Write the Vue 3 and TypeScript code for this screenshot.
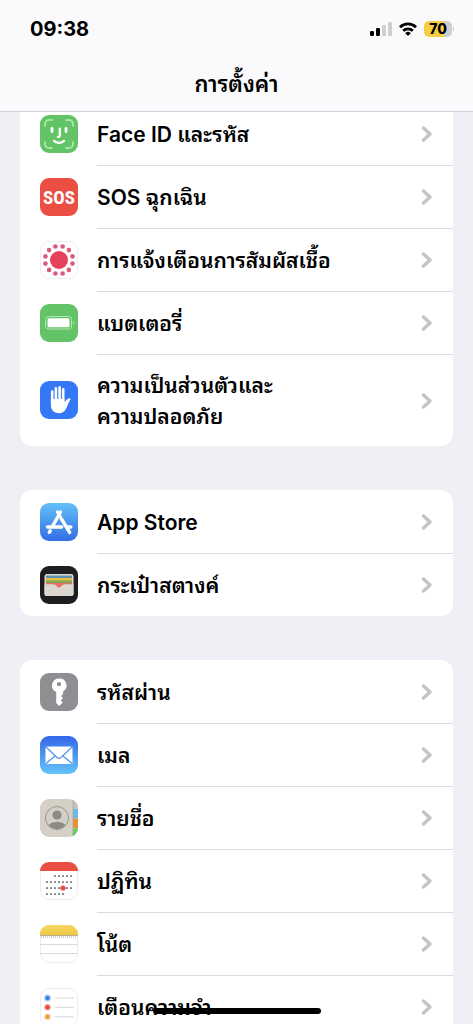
<script setup lang="ts">
type IconName =
  | 'face' | 'sos' | 'exposure' | 'battery' | 'hand' | 'store' | 'wallet'
  | 'key' | 'mail' | 'contacts' | 'calendar' | 'notes' | 'reminders'

interface Item {
  icon: IconName
  label: string
  tall?: boolean
}

const groups: Item[][] = [
  [
    { icon: 'face', label: 'Face ID และรหัส' },
    { icon: 'sos', label: 'SOS ฉุกเฉิน' },
    { icon: 'exposure', label: 'การแจ้งเตือนการสัมผัสเชื้อ' },
    { icon: 'battery', label: 'แบตเตอรี่' },
    { icon: 'hand', label: 'ความเป็นส่วนตัวและ\nความปลอดภัย', tall: true },
  ],
  [
    { icon: 'store', label: 'App Store' },
    { icon: 'wallet', label: 'กระเป๋าสตางค์' },
  ],
  [
    { icon: 'key', label: 'รหัสผ่าน' },
    { icon: 'mail', label: 'เมล' },
    { icon: 'contacts', label: 'รายชื่อ' },
    { icon: 'calendar', label: 'ปฏิทิน' },
    { icon: 'notes', label: 'โน้ต' },
    { icon: 'reminders', label: 'เตือนความจำ' },
  ],
]

const petals = Array.from({ length: 12 }, (_, i) => {
  const a = ((i + 0.5) / 12) * Math.PI * 2
  return { x: 19 + Math.sin(a) * 14, y: 19 - Math.cos(a) * 14 }
})

const days: { x: number; y: number }[] = []
const weeks = [
  [2, 6],
  [0, 6],
  [0, 6],
  [0, 4],
]
weeks.forEach(([from, to], row) => {
  for (let c = from; c <= to; c++) days.push({ x: 7 + c * 4, y: 14 + row * 6 })
})
</script>

<template>
  <div class="screen">
    <header class="top">
      <div class="status">
        <time class="clock">09:38</time>
        <div class="indicators">
          <svg width="22" height="14" viewBox="0 0 22 14" aria-hidden="true">
            <rect x="0" y="9" width="4" height="5" rx="1.2" />
            <rect x="6" y="6" width="4" height="8" rx="1.2" />
            <rect x="12" y="3" width="4" height="11" rx="1.2" fill="#cfcfd2" />
            <rect x="18" y="0" width="4" height="14" rx="1.2" fill="#cfcfd2" />
          </svg>
          <svg width="18" height="14" viewBox="0 0 18 14" aria-hidden="true">
            <g fill="none" stroke="#000" stroke-width="2.8">
              <path d="M1 5.2a11.4 11.4 0 0 1 16 0" />
              <path d="M4.2 8.8a6.9 6.9 0 0 1 9.6 0" />
            </g>
            <path d="M9 14 6.2 11.2a4 4 0 0 1 5.6 0Z" />
          </svg>
          <div class="battery">
            <div class="charge"><span class="level">70</span></div>
            <div class="nub"></div>
          </div>
        </div>
      </div>
      <h1 class="title">การตั้งค่า</h1>
    </header>

    <main class="list">
      <nav v-for="(group, g) in groups" :key="g" class="card">
        <a
          v-for="item in group"
          :key="item.icon"
          href="#"
          class="row"
          :class="{ tall: item.tall }"
        >
          <svg class="icon" viewBox="0 0 38 38" aria-hidden="true">
            <template v-if="item.icon === 'face'">
              <rect width="38" height="38" rx="9" fill="#62c466" />
              <g fill="none" stroke-linecap="round">
                <path d="M5 11V9a4 4 0 0 1 4-4h3M26 5h3a4 4 0 0 1 4 4v2M33 27v2a4 4 0 0 1-4 4h-3M12 33H9a4 4 0 0 1-4-4v-2" stroke="#a9e5a6" stroke-width="1.9" />
                <path d="M12 13.5v3M26 13.5v3" stroke="#fff" stroke-width="2.8" />
                <path d="M19.8 13.5v7q0 1.4-1.9 1.4M14 26q5 3.6 10 0" stroke="#fff" stroke-width="2.2" />
              </g>
            </template>

            <template v-else-if="item.icon === 'sos'">
              <rect width="38" height="38" rx="9" fill="#eb4e42" />
              <text x="19" y="26" text-anchor="middle" class="sos">SOS</text>
            </template>

            <template v-else-if="item.icon === 'exposure'">
              <rect x=".5" y=".5" width="37" height="37" rx="8.5" fill="#fff" stroke="#ededef" />
              <circle cx="19" cy="19" r="9" fill="#e8415a" />
              <circle v-for="(p, i) in petals" :key="i" :cx="p.x" :cy="p.y" r="2.3" fill="#dc587d" />
            </template>

            <template v-else-if="item.icon === 'battery'">
              <rect width="38" height="38" rx="9" fill="#62c466" />
              <rect x="5.5" y="12.5" width="26" height="12.5" rx="3" fill="none" stroke="#b7e5b5" />
              <rect x="7.5" y="14.2" width="22" height="9" rx="1.5" fill="#fff" />
              <path d="M33 16.5q2 2.2 0 4.5Z" fill="#b7e5b5" />
            </template>

            <template v-else-if="item.icon === 'hand'">
              <rect width="38" height="38" rx="9" fill="#3478f6" />
              <g fill="none" stroke="#fff" stroke-width="2.6" stroke-linecap="round">
                <path d="M12.2 10.5v12M15.9 7.3v14M19.6 6.3v15M23.2 8.3v14" />
              </g>
              <path d="M10.9 18h13.6v3.5l2.6-3.2q2-1.8 3.7-.5-2 3.2-3.6 7.2c-1.7 4.8-4.2 7.3-8.2 7.3-5 0-8.1-3.2-8.1-8.2Z" fill="#fff" />
            </template>

            <template v-else-if="item.icon === 'store'">
              <defs>
                <linearGradient id="storeFill" x2="0" y2="1">
                  <stop stop-color="#62c0f7" />
                  <stop offset="1" stop-color="#346ee6" />
                </linearGradient>
              </defs>
              <rect width="38" height="38" rx="9" fill="url(#storeFill)" />
              <g fill="none" stroke="#fff" stroke-width="3.4" stroke-linecap="round">
                <path d="M20.5 9 12.4 23.5M17.5 9l2.7 4.6M21.3 15.7 29.7 29.5M7.500 24h14.200M26.800 24h4M10.300 27.800l-1 1.500" />
              </g>
            </template>

            <template v-else-if="item.icon === 'wallet'">
              <rect width="38" height="38" rx="9" fill="#1e1e20" />
              <rect x="4.5" y="8" width="29" height="22" rx="2.5" fill="#dcd8cf" />
              <rect x="6" y="9.5" width="26" height="10" rx="1" fill="#5c92b2" />
              <path d="M6 12h26v6H6Z" fill="#edbd42" />
              <path d="M6 14.5h26v4H6Z" fill="#76ad55" />
              <path d="M6 16.800h26V21H6Z" fill="#e96e64" />
              <path d="M4.500 18.200h29v9.300A2.500 2.500 0 0 1 31 30H7a2.500 2.500 0 0 1-2.500-2.500Z" fill="#dcd8cf" />
              <path d="M13 18q2 0 3 1.500 3 4 6 0 1-1.500 3-1.500Z" fill="#e96e64" />
            </template>

            <template v-else-if="item.icon === 'key'">
              <rect width="38" height="38" rx="9" fill="#8e8e93" />
              <path fill-rule="evenodd" d="M19 5.5a7 7 0 0 0-2.8 13.4V30l3 3 3.6-3.5-2-2 2.3-2.2-2-2.2 2-2.2v-2.4A7 7 0 0 0 19 5.5Zm0 3.6a2.1 2.1 0 1 1 0 4.2 2.1 2.1 0 0 1 0-4.2Z" fill="#fff" />
            </template>

            <template v-else-if="item.icon === 'mail'">
              <defs>
                <linearGradient id="mailFill" x2="0" y2="1">
                  <stop stop-color="#3468e8" />
                  <stop offset="1" stop-color="#62c4f8" />
                </linearGradient>
              </defs>
              <rect width="38" height="38" rx="9" fill="url(#mailFill)" />
              <rect x="5.5" y="10.5" width="27" height="17.5" rx="1.5" fill="#fff" />
              <path d="m6 11 11 10.5q2 1.8 4 0L32 11M6 27.5l9.5-8M32 27.5l-9.5-8" fill="none" stroke="#4b8fe9" stroke-width="1.1" />
            </template>

            <template v-else-if="item.icon === 'contacts'">
              <defs>
                <clipPath id="bookClip"><rect width="38" height="38" rx="9" /></clipPath>
                <clipPath id="faceClip"><circle cx="17" cy="19" r="11" /></clipPath>
              </defs>
              <g clip-path="url(#bookClip)">
                <rect width="38" height="38" fill="#d4d0c6" />
                <rect x="33" width="5" height="10" fill="#c5c3bd" />
                <rect x="33" y="10" width="5" height="9" fill="#68b8ec" />
                <rect x="33" y="19.5" width="5" height="9.5" fill="#ee8f31" />
                <rect x="33" y="29.5" width="5" height="9" fill="#65c95c" />
                <path d="M33 0v38" stroke="#aaa69d" stroke-width=".8" />
              </g>
              <g clip-path="url(#faceClip)" fill="#8d8a84">
                <circle cx="17" cy="16" r="4.6" />
                <ellipse cx="17" cy="28" rx="9" ry="5.3" />
              </g>
              <circle cx="17" cy="19" r="11.5" fill="none" stroke="#98958e" />
            </template>

            <template v-else-if="item.icon === 'calendar'">
              <rect x=".5" y=".5" width="37" height="37" rx="8.5" fill="#fff" stroke="#ededef" />
              <path d="M0 9a9 9 0 0 1 9-9h20a9 9 0 0 1 9 9Z" fill="#e94e43" />
              <circle v-for="(d, i) in days" :key="i" :cx="d.x" :cy="d.y" r=".85" fill="#222" />
              <circle cx="23" cy="26" r="2.6" fill="#e94e43" />
            </template>

            <template v-else-if="item.icon === 'notes'">
              <defs>
                <linearGradient id="padFill" x2="0" y2="1">
                  <stop stop-color="#f6d864" />
                  <stop offset="1" stop-color="#edc740" />
                </linearGradient>
              </defs>
              <rect x=".5" y=".5" width="37" height="37" rx="8.5" fill="#fff" stroke="#ededef" />
              <path d="M0 10V9a9 9 0 0 1 9-9h20a9 9 0 0 1 9 9v1Z" fill="url(#padFill)" />
              <path d="M0 10.5h38" stroke="#b9b093" />
              <path d="M1 12h36" stroke="#aaa" stroke-dasharray="1 1" />
              <path d="M0 19.5h38M0 28.5h38" stroke="#d9d9db" />
            </template>

            <template v-else>
              <rect x=".5" y=".5" width="37" height="37" rx="8.5" fill="#fff" stroke="#ededef" />
              <g fill-opacity=".4">
                <circle cx="7.5" cy="10" r="3.4" fill="#3b82e8" />
                <circle cx="7.5" cy="19.3" r="3.4" fill="#e4493b" />
                <circle cx="7.5" cy="28.8" r="3.4" fill="#f09a37" />
              </g>
              <circle cx="7.5" cy="10" r="2.2" fill="#3b82e8" />
              <circle cx="7.5" cy="19.3" r="2.2" fill="#e4493b" />
              <circle cx="7.5" cy="28.8" r="2.2" fill="#f09a37" />
              <path d="M15 10h19M15 19.3h19M15 28.8h19" stroke="#d6d6d8" />
            </template>
          </svg>
          <span class="body">
            <span class="label">{{ item.label }}</span>
            <svg class="chevron" width="12" height="18" viewBox="0 0 12 18" aria-hidden="true">
              <path d="m2.5 3 6.5 6-6.5 6" />
            </svg>
          </span>
        </a>
      </nav>
    </main>

    <div class="home"></div>
  </div>
</template>

<style>
body {
  margin: 0;
  background: #f0eff5;
}
</style>

<style scoped>
.screen {
  height: 100vh;
  overflow: hidden;
  position: relative;
  background: #f0eff5;
  color: #000;
  font-family: Inter, "Noto Sans Thai Looped", Loma, Garuda, "Noto Sans", sans-serif;
}

.top {
  position: relative;
  z-index: 1;
  box-sizing: border-box;
  height: 112px;
  background: #fafafc;
  border-bottom: 1px solid #d3d3d7;
}

.status {
  display: flex;
  justify-content: space-between;
  align-items: center;
  height: 58px;
  padding: 0 19px 0 30px;
}

.clock {
  font-size: 20px;
  font-weight: 700;
}

.indicators {
  display: flex;
  align-items: center;
  gap: 7px;
}

.battery {
  display: flex;
  align-items: center;
  gap: 1px;
}

.charge {
  display: flex;
  align-items: center;
  justify-content: center;
  width: 28px;
  height: 16px;
  border-radius: 5px;
  background: linear-gradient(to right, #f5ce46 70%, #cfcfd2 70%);
}

.nub {
  width: 1px;
  height: 4px;
  background: #cfcfd2;
}

.level {
  font-size: 14px;
  font-weight: 800;
  line-height: 16px;
}

.title {
  margin: 0;
  font-size: 22px;
  font-weight: 600;
  line-height: 52px;
  text-align: center;
}

.list {
  display: flex;
  flex-direction: column;
  gap: 44px;
  margin-top: -10px;
  padding: 0 20px;
}

.card {
  overflow: hidden;
  flex: none;
  border-radius: 12px;
  background: #fff;
}

.row {
  display: flex;
  align-items: center;
  gap: 19px;
  height: 63px;
  padding-left: 20px;
  color: inherit;
  text-decoration: none;
}

.row.tall {
  height: 92px;
}

.icon {
  flex: none;
  width: 38px;
  height: 38px;
}

.sos {
  fill: #fff;
  font-family: "Roboto Condensed", Roboto, sans-serif;
  font-size: 19px;
  font-weight: 700;
}

.body {
  box-sizing: border-box;
  display: flex;
  flex: 1;
  align-items: center;
  justify-content: space-between;
  height: 100%;
  padding-right: 20px;
  border-top: 1px solid transparent;
}

.row + .row .body {
  border-top-color: #dcdcdf;
}

.label {
  font-size: 21px;
  font-weight: 600;
  line-height: 31px;
  white-space: pre-line;
}

.chevron path {
  fill: none;
  stroke: #c4c4c6;
  stroke-width: 3.4;
  stroke-linecap: round;
  stroke-linejoin: round;
}

.home {
  position: fixed;
  bottom: 10px;
  left: 50%;
  width: 168px;
  height: 6px;
  margin-left: -84px;
  border-radius: 3px;
  background: #000;
}
</style>
